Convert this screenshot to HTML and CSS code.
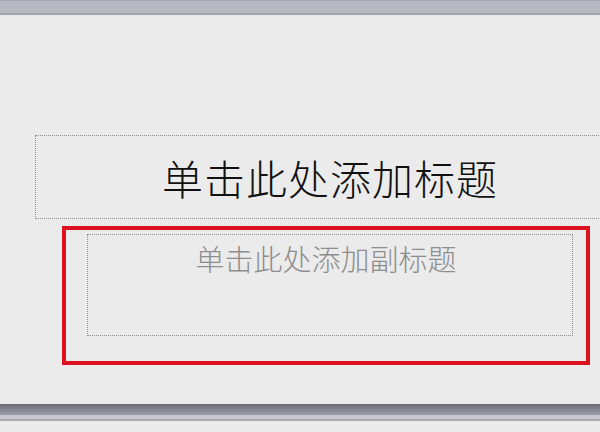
FILE: index.html
```html
<!DOCTYPE html>
<html lang="zh-CN">
<head>
<meta charset="utf-8">
<title>幻灯片</title>
<link rel="stylesheet" href="styles.css">
</head>
<body>
<div class="page">
  <div class="top-bar"></div>
  <div class="stage">
    <div class="title-box"><span class="title-text">单击此处添加标题</span></div>
    <div class="highlight">
      <div class="subtitle-box"><span class="subtitle-text">单击此处添加副标题</span></div>
    </div>
  </div>
  <div class="bottom-bar">
    <div class="bar-dark"></div>
    <div class="bar-light"></div>
    <div class="bar-gray"></div>
  </div>
  <div class="bottom-space"></div>
</div>
</body>
</html>
```
FILE: styles.css
```css
html, body {
  margin: 0;
  padding: 0;
  background: #ebebeb;
}
.page {
  width: 600px;
  height: 432px;
  overflow: hidden;
  display: flex;
  flex-direction: column;
  font-family: "Noto Sans CJK SC", "Noto Sans", sans-serif;
}
.top-bar {
  height: 15px;
  flex: none;
  box-sizing: border-box;
  background: #b6b9c1;
  border-top: 1px solid #a3a6ae;
  border-bottom: 2px solid #a0a3ab;
}
.stage {
  height: 389px;
  flex: none;
  overflow: hidden;
  padding-top: 120px;
  box-sizing: border-box;
}
.title-box {
  margin-left: 35px;
  width: 590px;
  height: 84px;
  box-sizing: border-box;
  border: 1px dotted #8d8d8d;
  display: flex;
  align-items: center;
  justify-content: center;
}
.title-text {
  font-size: 41px;
  line-height: 1;
  color: #111;
  font-weight: 300;
  letter-spacing: 1px;
}
.highlight {
  margin-top: 7px;
  margin-left: 62px;
  width: 528px;
  height: 139px;
  box-sizing: border-box;
  border: 4px solid #dd1120;
  padding: 4px 0 0 21px;
}
.subtitle-box {
  width: 486px;
  height: 102px;
  box-sizing: border-box;
  border: 1px dotted #8d8d8d;
  display: flex;
  justify-content: center;
  padding-top: 6px;
  padding-right: 8px;
}
.subtitle-text {
  font-size: 29px;
  line-height: 1.2;
  color: #8e8e8e;
  font-weight: 300;
}
.bottom-bar {
  flex: none;
  display: flex;
  flex-direction: column;
}
.bar-dark {
  height: 11px;
  background: linear-gradient(#6b6e77, #9a9da6);
}
.bar-light {
  height: 4px;
  background: #c6c9d0;
}
.bar-gray {
  height: 2px;
  background: #a9abb1;
}
.bottom-space {
  flex: 1;
}
```
